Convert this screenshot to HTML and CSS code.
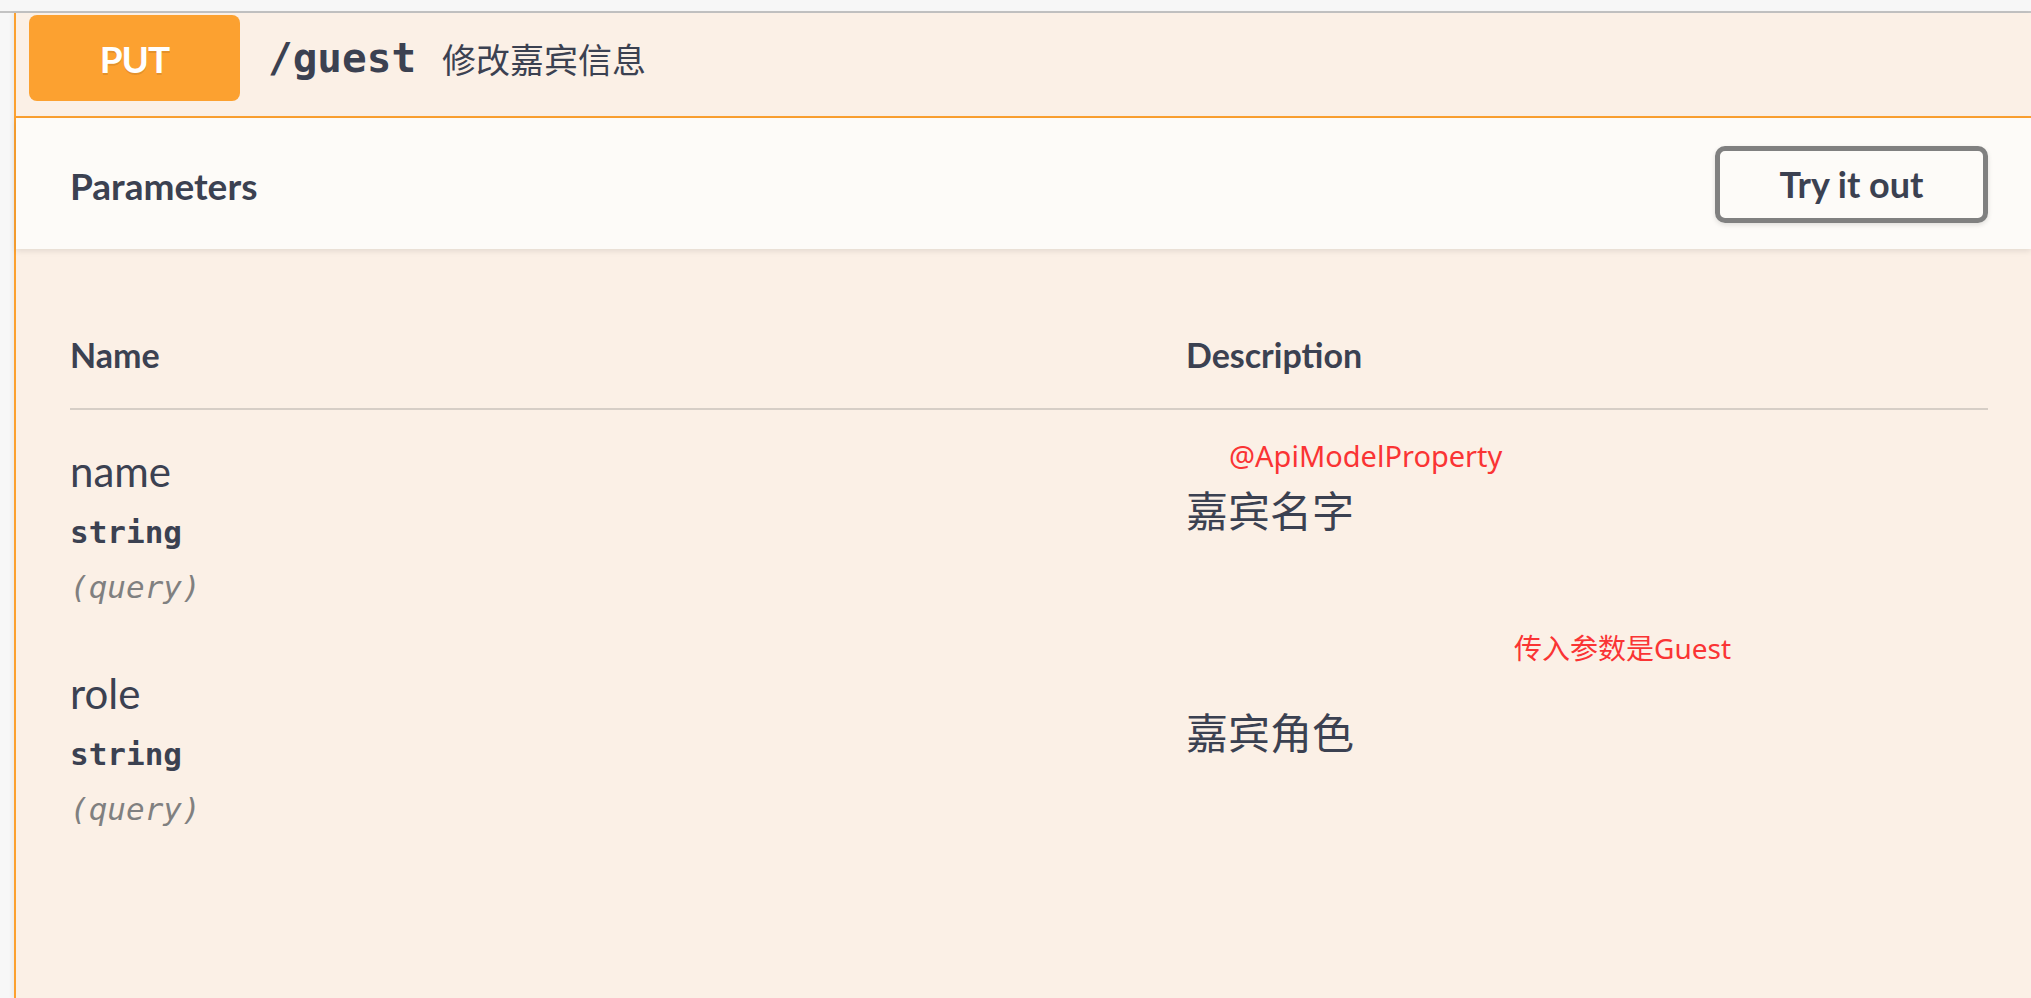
FILE: index.html
```html
<!DOCTYPE html>
<html lang="zh-CN">
<head>
    <meta charset="UTF-8">
    <meta name="viewport" content="width=device-width, initial-scale=1.0">
    <title>PUT /guest</title>
    <link rel="stylesheet" href="styles.css">
</head>
<body>
    <div class="topbar"></div>

    <div class="page">
        <div class="opblock">
            <div class="summary">
                <span class="method">PUT</span>
                <span class="path">/guest</span>
                <span class="summary-desc">修改嘉宾信息</span>
            </div>

            <div class="section-header">
                <h4>Parameters</h4>
                <button class="try-out">Try it out</button>
            </div>

            <div class="table-container">
                <table class="parameters">
                    <thead>
                        <tr>
                            <th class="col-name">Name</th>
                            <th class="col-desc">Description</th>
                        </tr>
                    </thead>
                    <tbody>
                        <tr>
                            <td class="col-name">
                                <div class="param-name">name</div>
                                <div class="param-type">string</div>
                                <div class="param-in">(query)</div>
                            </td>
                            <td class="col-desc">
                                <span class="note note-model">@ApiModelProperty</span>
                                <p class="param-desc">嘉宾名字</p>
                            </td>
                        </tr>
                        <tr>
                            <td class="col-name">
                                <div class="param-name">role</div>
                                <div class="param-type">string</div>
                                <div class="param-in">(query)</div>
                            </td>
                            <td class="col-desc">
                                <span class="note note-guest">传入参数是Guest</span>
                                <p class="param-desc">嘉宾角色</p>
                            </td>
                        </tr>
                    </tbody>
                </table>
            </div>
        </div>
    </div>
</body>
</html>
```

FILE: styles.css
```css
body {
    margin: 0;
    background-color: #f7f7f7;
    color: #3b4151;
    font-family: Lato, "Noto Sans CJK SC", sans-serif;
    height: 998px;
    overflow: hidden;
}

.topbar {
    height: 11px;
    background-color: #f7f7f7;
    border-bottom: 2px solid #c3c3c3;
}

.page {
    padding-left: 14px;
}

.opblock {
    background-color: #fbf0e6;
    border-left: 2px solid #fca130;
    box-shadow: -2px 0 4px rgba(0, 0, 0, 0.05);
    height: 985px;
}

/* summary row */
.summary {
    display: flex;
    align-items: center;
    padding: 2px 13px 15px;
    border-bottom: 2px solid #fca130;
}

.method {
    width: 211px;
    height: 86px;
    border-radius: 8px;
    background-color: #fca130;
    color: #fff;
    font-weight: 700;
    font-size: 37px;
    letter-spacing: -1px;
    display: flex;
    align-items: center;
    justify-content: center;
    text-shadow: 0 2px 0 rgba(0, 0, 0, 0.1);
}

.path {
    margin-left: 28px;
    font-family: "DejaVu Sans Mono", monospace;
    font-weight: 700;
    font-size: 41px;
}

.summary-desc {
    margin-left: 26px;
    font-family: "Noto Sans CJK SC", sans-serif;
    font-size: 34px;
}

/* parameters header */
.section-header {
    display: flex;
    align-items: center;
    justify-content: space-between;
    height: 131px;
    padding: 0 43px 0 54px;
    background-color: #fdfbf8;
    box-shadow: 0 2px 6px rgba(0, 0, 0, 0.1);
}

.section-header h4 {
    margin: 4px 0 0;
    font-size: 37px;
    font-weight: 700;
}

.try-out {
    width: 273px;
    height: 77px;
    margin-top: 1px;
    background: transparent;
    border: 5px solid #808080;
    border-radius: 10px;
    box-shadow: 0 2px 5px rgba(0, 0, 0, 0.12);
    color: #3b4151;
    font-family: Lato, sans-serif;
    font-weight: 700;
    font-size: 36px;
}

/* table */
.table-container {
    padding: 86px 43px 0 54px;
}

.parameters {
    width: 100%;
    border-collapse: collapse;
}

.parameters th {
    text-align: left;
    font-size: 34px;
    font-weight: 700;
    line-height: 40px;
    padding: 0 0 33px;
    border-bottom: 2px solid #d6cec6;
}

.parameters th.col-name,
.parameters td.col-name {
    width: 1116px;
}

.parameters td {
    vertical-align: top;
    padding: 37px 0 17px;
}

.col-desc {
    position: relative;
}

.param-name {
    font-size: 42px;
    font-weight: 400;
    line-height: 48px;
}

.param-type {
    margin-top: 10px;
    font-family: "DejaVu Sans Mono", monospace;
    font-weight: 700;
    font-size: 31px;
    line-height: 55px;
}

.param-in {
    font-family: "DejaVu Sans Mono", monospace;
    font-style: italic;
    font-size: 31px;
    line-height: 55px;
    color: #808080;
}

.param-desc {
    margin: 37px 0 0;
    font-family: "Noto Sans CJK SC", sans-serif;
    font-size: 42px;
    line-height: 50px;
}

/* red annotations drawn over the page */
.note {
    position: absolute;
    color: #fa3434;
    font-family: "Noto Sans", "Noto Sans CJK SC", sans-serif;
    line-height: 32px;
    white-space: nowrap;
}

.note-model {
    top: 30px;
    left: 43px;
    font-size: 29px;
}

.note-guest {
    top: 0;
    left: 328px;
    font-size: 28px;
}
```
